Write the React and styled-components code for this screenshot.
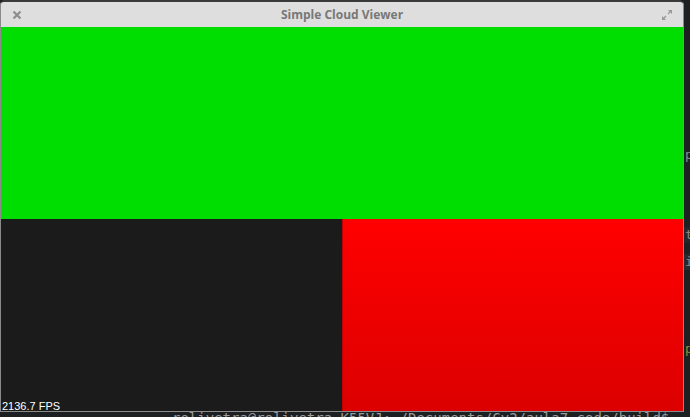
import styled, { createGlobalStyle } from 'styled-components';

const GlobalStyle = createGlobalStyle`
  html, body {
    margin: 0;
    padding: 0;
    background: #1d2023;
    overflow: hidden;
  }
  #root {
    width: 690px;
    height: 417px;
  }
`;

const Desktop = styled.div`
  display: flex;
  flex-direction: column;
  width: 690px;
  height: 417px;
  overflow: hidden;
  background: #1d2023;
`;

const Top = styled.div`
  display: flex;
`;

const Window = styled.div`
  display: flex;
  flex-direction: column;
  width: 682px;
  height: 409px;
  border: 1px solid #8a8a8a;
  border-top: 2px solid #3a3a3a;
  border-radius: 5px 5px 0 0;
  background: #dcdcdc;
  overflow: hidden;
`;

const TitleBar = styled.div`
  display: flex;
  align-items: center;
  justify-content: space-between;
  height: 25px;
  padding: 0 10px 0 10px;
  background: #dedede;
  font-family: 'Open Sans', 'DejaVu Sans', sans-serif;
`;

const Title = styled.span`
  font-size: 12px;
  font-weight: 700;
  color: #787878;
`;

const IconBox = styled.span`
  display: flex;
  width: 12px;
  height: 12px;
`;

const Canvas = styled.div`
  display: grid;
  grid-template-columns: 341px 1fr;
  grid-template-rows: 192px 1fr;
  flex: 1;
`;

const Green = styled.div`
  grid-column: 1 / 3;
  background: #00dd00;
`;

const Dark = styled.div`
  position: relative;
  background: #1b1b1b;
`;

const Red = styled.div`
  background: linear-gradient(#ff0000, #dc0000);
  border-left: 1px solid #c00000;
`;

const Fps = styled.span`
  position: absolute;
  left: 1px;
  bottom: -1px;
  font-family: 'Liberation Sans', Arial, sans-serif;
  font-size: 11px;
  color: #ffffff;
`;

const Side = styled.div`
  flex: 1;
  position: relative;
  overflow: hidden;
  background: #1d2023;
`;

const SideLine = styled.div`
  position: absolute;
  left: 0;
  top: ${(p) => p.$top}px;
  width: 100%;
  height: 16px;
  padding-left: 1px;
  background: ${(p) => p.$bg || 'transparent'};
  font-family: 'DejaVu Sans Mono', monospace;
  font-size: 13px;
  line-height: 16px;
  color: ${(p) => p.$color || '#8a8a8a'};
`;

const Terminal = styled.div`
  height: 6px;
  overflow: hidden;
  padding-left: 172px;
  font-family: 'DejaVu Sans Mono', monospace;
  font-size: 14px;
  line-height: 14px;
  color: #9a9a9a;
  white-space: nowrap;
`;

const TermText = styled.div`
  margin-top: -1px;
`;

const Close = () => (
  <svg width="12" height="12" viewBox="0 0 12 12">
    <path d="M2.5 2.5 L9.5 9.5 M9.5 2.5 L2.5 9.5" stroke="#8c8c8c" strokeWidth="2.2" />
  </svg>
);

const Maximize = () => (
  <svg width="12" height="12" viewBox="0 0 12 12">
    <path d="M7 1 H11 V5 Z M1 7 V11 H5 Z" fill="#9a9a9a" />
    <path d="M10 2 L7 5 M2 10 L5 7" stroke="#9a9a9a" strokeWidth="1.4" />
  </svg>
);

export default function App() {
  return (
    <Desktop>
      <GlobalStyle />
      <Top>
        <Window>
          <TitleBar>
            <IconBox>
              <Close />
            </IconBox>
            <Title>Simple Cloud Viewer</Title>
            <IconBox>
              <Maximize />
            </IconBox>
          </TitleBar>
          <Canvas>
            <Green />
            <Dark>
              <Fps>2136.7 FPS</Fps>
            </Dark>
            <Red />
          </Canvas>
        </Window>
        <Side>
          <SideLine $top={147}>p</SideLine>
          <SideLine $top={227} $bg="#23272b">t</SideLine>
          <SideLine $top={254} $bg="#262a2e">i</SideLine>
          <SideLine $top={341} $color="#8a8a30">p</SideLine>
        </Side>
      </Top>
      <Terminal>
        <TermText>rolivetra@rolivetra-K55VJ:~/Documents/Cv2/aula7-code/build$ ./viewer</TermText>
      </Terminal>
    </Desktop>
  );
}
